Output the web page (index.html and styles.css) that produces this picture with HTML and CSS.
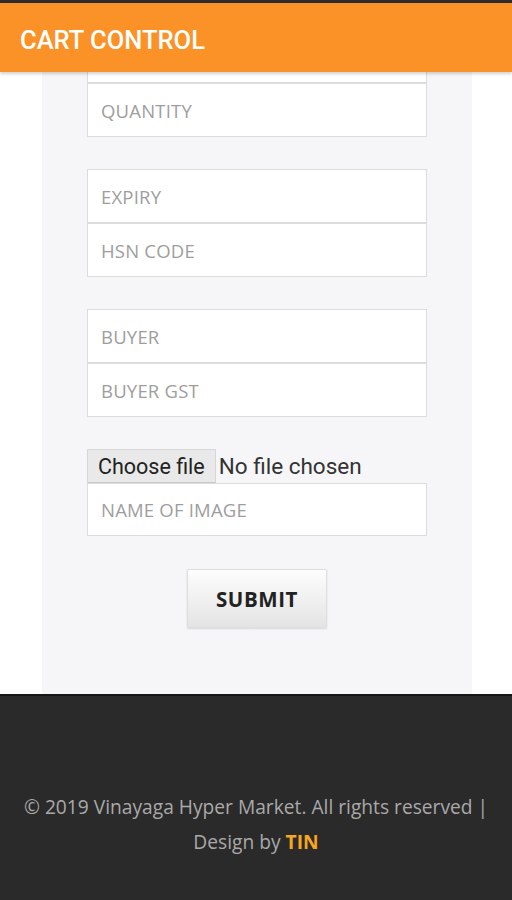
FILE: index.html
```html
<!DOCTYPE html>
<html>
<head>
<meta charset="utf-8">
<link rel="stylesheet" href="styles.css">
</head>
<body>
<div class="statusbar"></div>
<header class="topbar"><h1 class="title">CART CONTROL</h1></header>
<main class="main">
  <section class="panel">
    <div class="stub"></div>
    <input class="field" type="text" placeholder="QUANTITY">
    <div class="group">
      <input class="field" type="text" placeholder="EXPIRY">
      <input class="field" type="text" placeholder="HSN CODE">
    </div>
    <div class="group">
      <input class="field" type="text" placeholder="BUYER">
      <input class="field" type="text" placeholder="BUYER GST">
    </div>
    <div class="group">
      <div class="filerow"><button class="filebtn" type="button">Choose file</button><span class="filename">No file chosen</span></div>
      <input class="field field-img" type="text" placeholder="NAME OF IMAGE">
    </div>
    <div class="actions"><button class="submit" type="button">SUBMIT</button></div>
  </section>
</main>
<footer class="footer">
  <p class="copy">© 2019 Vinayaga Hyper Market. All rights reserved |<br>Design by <span class="brand">TIN</span></p>
</footer>
</body>
</html>
```
FILE: styles.css
```css
* { box-sizing: border-box; }
html, body { margin: 0; padding: 0; }
body { width: 512px; height: 900px; overflow: hidden; background: #fff; font-family: "Open Sans", sans-serif; }
.statusbar { height: 3px; background: #2c2c2c; }
.topbar {
  height: 69px; background: #fb9227; display: flex; align-items: center; padding: 4px 0 0 20px;
  box-shadow: 0 2px 3px rgba(0,0,0,0.18); position: relative; z-index: 2;
}
.title { margin: 0; font-family: Roboto, sans-serif; font-weight: 500; font-size: 25.5px; color: #fff; letter-spacing: 0; }
.main { background: #fff; height: 622px; }
.panel { margin-left: 42px; width: 430px; height: 622px; background: #f6f6f8; padding: 0 45px; display: flex; flex-direction: column; }
.stub { width: 340px; height: 11px; background: #fff; border: 1px solid #dcdcdc; border-top: none; }
.field {
  display: block; width: 340px; height: 54px; margin: 0; border: 1px solid #dcdcdc; background: #fff;
  padding: 0 13px; font-family: "Open Sans", sans-serif; font-size: 18.5px; letter-spacing: 0.2px; color: #333; outline: none;
}
.field::placeholder { color: #9e9e9e; }
.group { margin-top: 32px; display: flex; flex-direction: column; }
.filerow { display: flex; align-items: center; height: 34px; }
.filebtn {
  height: 34px; padding: 0 10px; margin: 0; border: 1px solid #d6d6d6; border-bottom-color: #c9c9c9; background: #e9e9e9;
  font-family: Roboto, sans-serif; font-size: 21.5px; color: #222; border-radius: 1px;
}
.filename { margin-left: 3px; font-family: Roboto, sans-serif; font-size: 22.5px; color: #333; }
.field-img { height: 53px; }
.actions { margin-top: 33px; display: flex; justify-content: center; }
.submit {
  width: 140px; height: 59px; border: 1px solid #dedede; border-radius: 1px;
  background: linear-gradient(#fdfdfd, #e4e4e4); box-shadow: 0 1px 2px rgba(0,0,0,0.12);
  font-family: "Open Sans", sans-serif; font-weight: 700; font-size: 20.5px; color: #222; letter-spacing: 0.6px;
}
.footer { height: 206px; background: #2a2a2a; border-top: 2px solid #151515; display: flex; justify-content: center; padding-top: 93px; }
.copy { margin: 0; text-align: center; font-size: 19.2px; line-height: 35px; color: #a9a9a9; }
.brand { color: #f5a623; font-weight: 700; }
```
